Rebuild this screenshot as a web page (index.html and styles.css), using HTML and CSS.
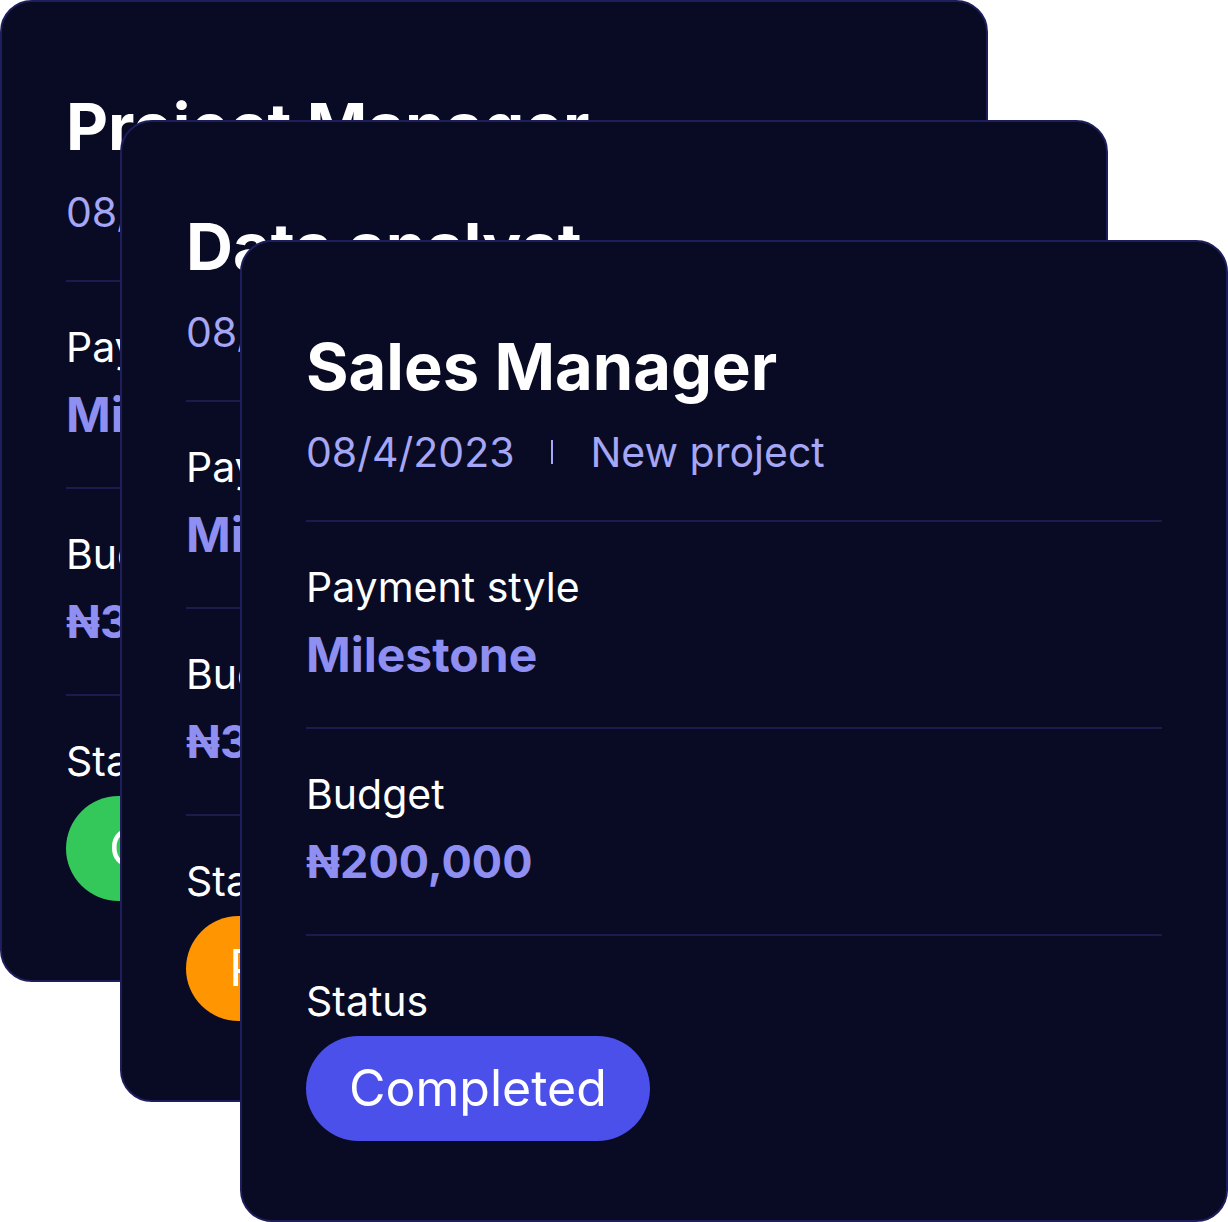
FILE: index.html
```html
<!DOCTYPE html>
<html lang="en">
<head>
    <meta charset="UTF-8">
    <meta name="viewport" content="width=device-width, initial-scale=1.0">
    <title>Projects</title>
    <link rel="stylesheet" href="styles.css">
</head>
<body>
    <div class="stack">
        <article class="card">
            <header class="card-head">
                <h2 class="card-title">Project Manager</h2>
                <p class="card-meta"><span>08/4/2023</span><span class="sep"></span><span>New project</span></p>
            </header>
            <section class="card-row">
                <p class="row-label">Payment style</p>
                <p class="row-value">Milestone</p>
            </section>
            <section class="card-row">
                <p class="row-label">Budget</p>
                <p class="row-value row-money">₦300,000</p>
            </section>
            <section class="card-row">
                <p class="row-label">Status</p>
                <span class="badge badge-green">Completed</span>
            </section>
        </article>

        <article class="card card-mid">
            <header class="card-head">
                <h2 class="card-title">Data analyst</h2>
                <p class="card-meta"><span>08/4/2023</span><span class="sep"></span><span>New project</span></p>
            </header>
            <section class="card-row">
                <p class="row-label">Payment style</p>
                <p class="row-value">Milestone</p>
            </section>
            <section class="card-row">
                <p class="row-label">Budget</p>
                <p class="row-value row-money">₦350,000</p>
            </section>
            <section class="card-row">
                <p class="row-label">Status</p>
                <span class="badge badge-orange">Pending</span>
            </section>
        </article>

        <article class="card card-front">
            <header class="card-head">
                <h2 class="card-title">Sales Manager</h2>
                <p class="card-meta"><span>08/4/2023</span><span class="sep"></span><span>New project</span></p>
            </header>
            <section class="card-row">
                <p class="row-label">Payment style</p>
                <p class="row-value">Milestone</p>
            </section>
            <section class="card-row">
                <p class="row-label">Budget</p>
                <p class="row-value row-money">₦200,000</p>
            </section>
            <section class="card-row">
                <p class="row-label">Status</p>
                <span class="badge badge-blue">Completed</span>
            </section>
        </article>
    </div>
</body>
</html>
```

FILE: styles.css
```css
body {
    margin: 0;
    background: #ffffff;
    font-family: Inter, 'Noto Sans', sans-serif;
}
.stack {
    display: grid;
    width: 1228px;
    height: 1222px;
}
.card {
    grid-area: 1 / 1;
    width: 988px;
    height: 982px;
    box-sizing: border-box;
    padding: 85px 64px 0;
    background: #090a24;
    border: 2px solid #1e1e5c;
    border-radius: 32px;
    color: #ffffff;
}
.card-mid {
    margin: 120px 0 0 120px;
}
.card-front {
    margin: 240px 0 0 240px;
}
.card-head {
    padding-bottom: 42px;
}
.card-title {
    margin: 0;
    font-size: 65px;
    line-height: 80px;
    font-weight: 700;
}
.card-meta {
    display: flex;
    align-items: center;
    gap: 37px;
    margin: 19px 0 0;
    font-size: 41px;
    line-height: 52px;
    color: #a5a6f6;
}
.sep {
    width: 2px;
    height: 24px;
    background: #a5a6f6;
}
.card-row {
    border-top: 2px solid #1b1b4d;
    padding: 40px 0 42px;
}
.row-label {
    margin: 0;
    font-size: 41px;
    line-height: 50px;
}
.row-value {
    margin: 13px 0 0;
    font-size: 48px;
    line-height: 60px;
    font-weight: 700;
    color: #8e8ff0;
}
.row-money {
    font-size: 45px;
}
.badge {
    display: inline-block;
    margin-top: 10px;
    padding: 0 43px;
    height: 105px;
    line-height: 105px;
    border-radius: 999px;
    font-size: 50px;
    color: #ffffff;
}
.badge-blue {
    background: #4b50ea;
}
.badge-green {
    background: #34c759;
}
.badge-orange {
    background: #ff9500;
}
```
